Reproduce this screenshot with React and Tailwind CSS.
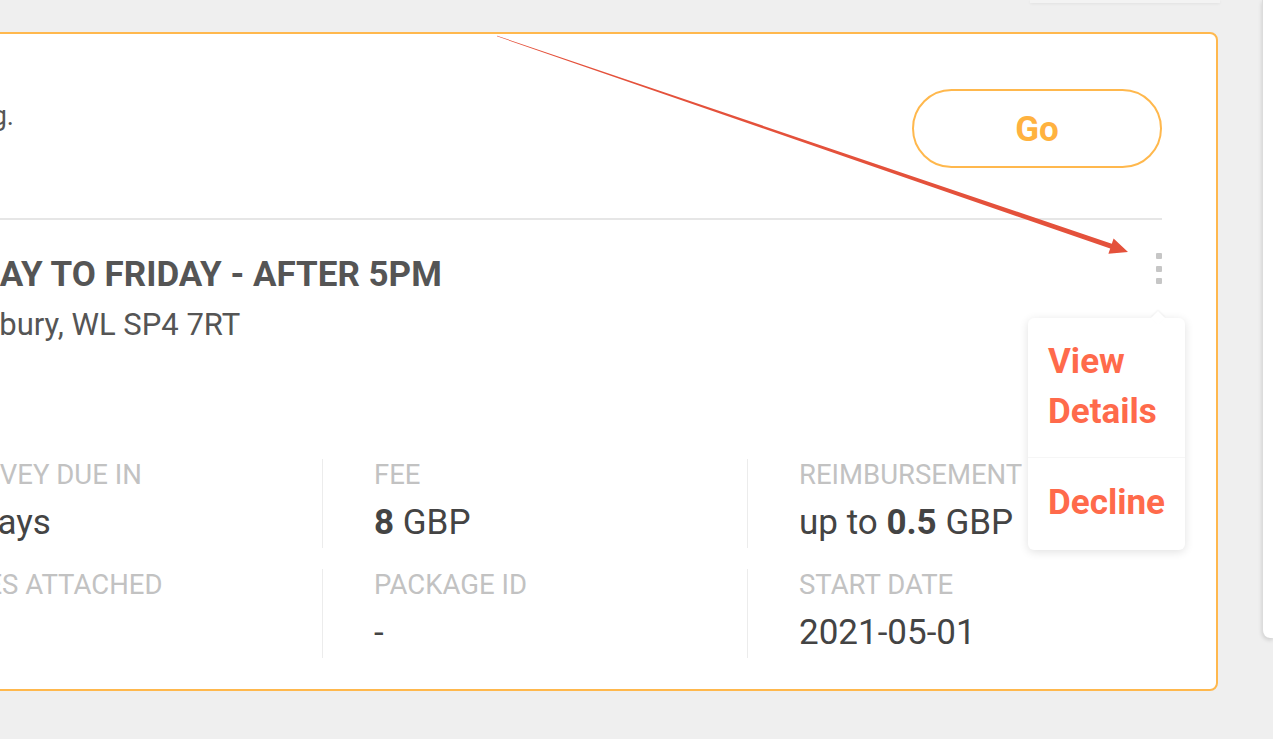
import React from 'react';

const font = { fontFamily: 'Roboto, "Noto Sans", sans-serif' };

function InfoCell({ label, children, first }) {
  return (
    <div className={`h-[89px] ${first ? '' : 'border-l border-[#ececec] pl-[51px]'}`}>
      <div className="text-[27.5px] leading-[32px] text-[#c2c2c2] whitespace-nowrap">{label}</div>
      <div className="mt-[11px] text-[35px] leading-[42px] text-[#444] whitespace-nowrap">{children}</div>
    </div>
  );
}

// Seta vermelha de anotação (sobreposta à página)
function Arrow() {
  return (
    <svg className="absolute inset-0 pointer-events-none" width="1273" height="739" viewBox="0 0 1273 739">
      <polygon
        points="496.9,36.3 1110.2,248.6 1108.4,253.8 1128,252 1113.6,238.6 1111.8,243.8 497.1,35.7"
        fill="#e4513b"
      />
    </svg>
  );
}

export default function App() {
  return (
    <div className="relative w-[1273px] h-[739px] overflow-hidden bg-[#efefef] flex" style={font}>
      <div className="w-[1262px] flex flex-col shrink-0">
        {/* resto do cartão anterior */}
        <div className="h-[3px] w-[190px] ml-[1030px] bg-[#f3f3f3] shadow-[0_1px_3px_rgba(0,0,0,0.06)]" />

        {/* Cartão */}
        <div className="relative ml-[-107px] mt-[29px] w-[1325px] bg-white border-2 border-[#ffb84d] rounded-[8px] pl-[54px] pr-[54px] pt-[55px] pb-[31px]">
          <div className="flex items-start justify-between">
            <div className="w-[65px] flex justify-end mt-[11px]">
              <p className="whitespace-nowrap text-[27px] leading-[32px] text-[#555]">
                Please complete the survey during the evening.
              </p>
            </div>
            <button className="w-[250px] h-[79px] rounded-full border-2 border-[#ffb84d] text-[#ffb23f] text-[35px] font-bold flex items-center justify-center pt-[3px]">
              Go
            </button>
          </div>

          <div className="mt-[50px] h-[2px] bg-[#e6e6e6]" />

          <div className="mt-[34px] flex items-start justify-between">
            <div>
              <h2 className="ml-[-51px] text-[35px] leading-[42px] font-bold text-[#555] whitespace-nowrap">
                MONDAY TO FRIDAY - AFTER 5PM
              </h2>
              <div className="mt-[13px] ml-[-16px] text-[31px] leading-[32px] text-[#555] whitespace-nowrap">
                Salisbury, WL SP4 7RT
              </div>
            </div>
            <div className="-mt-[1px] flex flex-col gap-[6.5px]">
              <span className="w-[6px] h-[6px] rounded-[1px] bg-[#c6c6c6]" />
              <span className="w-[6px] h-[6px] rounded-[1px] bg-[#c6c6c6]" />
              <span className="w-[6px] h-[6px] rounded-[1px] bg-[#c6c6c6]" />
            </div>
          </div>

          <div className="mt-[118px] grid grid-cols-[373px_425px_1fr] gap-y-[21px]">
            <InfoCell label="SURVEY DUE IN" first>
              <span className="font-bold">3</span> days
            </InfoCell>
            <InfoCell label="FEE">
              <span className="font-bold">8</span> GBP
            </InfoCell>
            <InfoCell label="REIMBURSEMENT">
              up to <span className="font-bold">0.5</span> GBP
            </InfoCell>
            <InfoCell label="FILES ATTACHED" first>
              0
            </InfoCell>
            <InfoCell label="PACKAGE ID">-</InfoCell>
            <InfoCell label="START DATE">2021-05-01</InfoCell>
          </div>

          {/* Menu de ações */}
          <div className="absolute right-[31px] top-[284px] w-[157px] bg-white rounded-[6px] shadow-[0_2px_10px_rgba(0,0,0,0.12)]">
            <div className="absolute right-[22px] -top-[5px] w-[10px] h-[10px] rotate-45 bg-white shadow-[-1px_-1px_2px_rgba(0,0,0,0.05)]" />
            <div className="relative pl-[20px] pt-[19px] pb-[20px] border-b border-[#f6f6f6] text-[35px] leading-[50px] font-bold text-[#ff6a4b]">
              View
              <br />
              Details
            </div>
            <div className="relative pl-[20px] pt-[20px] pb-[22px] text-[35px] leading-[50px] font-bold text-[#ff6a4b]">
              Decline
            </div>
          </div>
        </div>
      </div>

      {/* Painel lateral */}
      <div className="flex-1 h-[638px] bg-white border-l border-[#dcdcdc] rounded-bl-[8px] shadow-[0_2px_4px_rgba(0,0,0,0.15)]" />

      <Arrow />
    </div>
  );
}
